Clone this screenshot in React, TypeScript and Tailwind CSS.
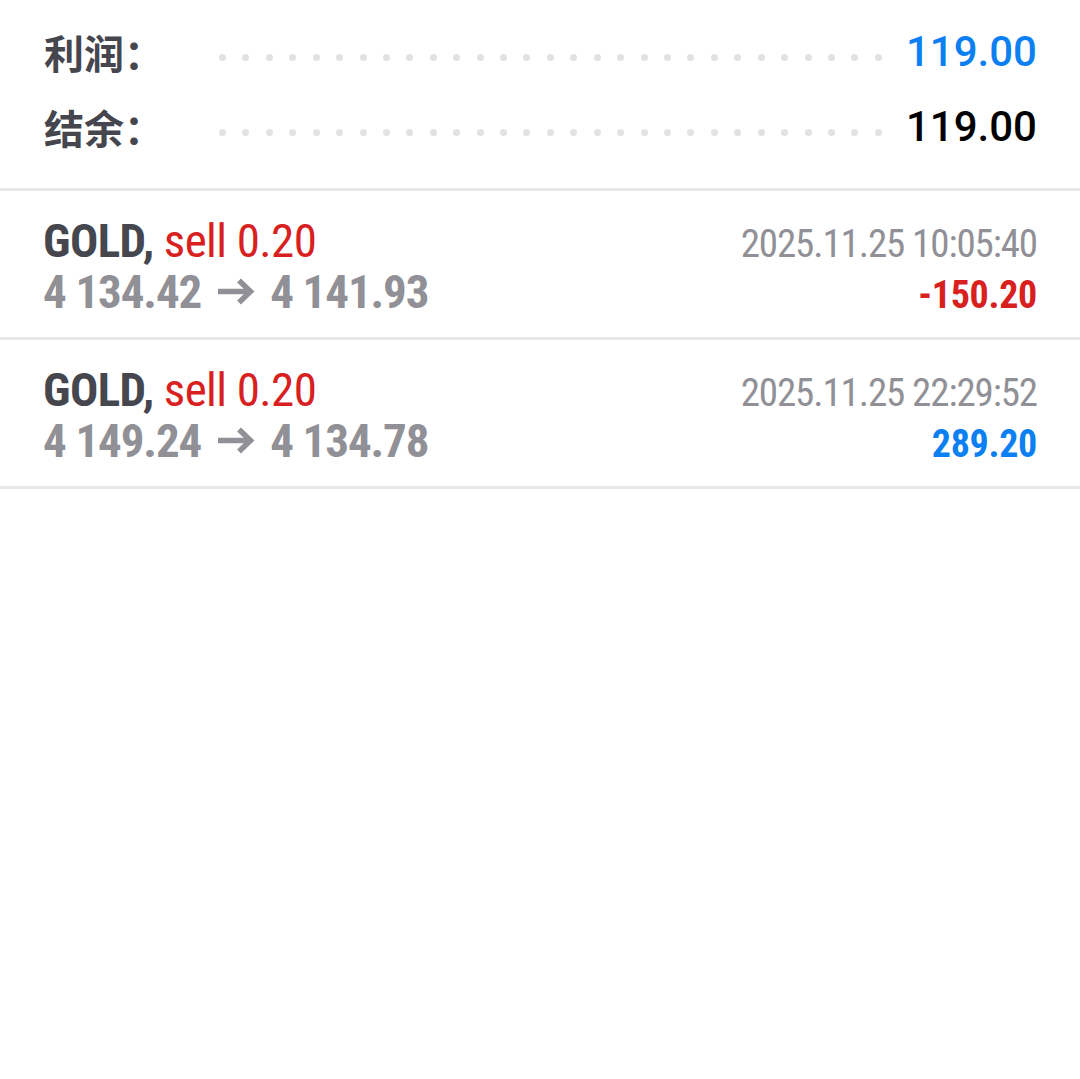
const dots = Array.from({ length: 29 });

const SummaryRow = ({ label, value, color }: { label: string; value: string; color: string }) => (
  <div className="flex items-center h-[75px]">
    <div className="w-[175px] text-[40px] font-bold text-[#46464e] leading-none [font-family:'Noto_Sans_CJK_SC',sans-serif]">
      {label}
    </div>
    <div className="w-[663px] flex justify-between items-center mt-[12px]">
      {dots.map((_, i) => (
        <span key={i} className="block w-[7px] h-[7px] rounded-full bg-[#e2e2e2]" />
      ))}
    </div>
    <div className={`flex-1 text-right text-[42px] font-medium leading-none ${color}`}>{value}</div>
  </div>
);

const Arrow = () => (
  <svg
    width="38"
    height="27"
    viewBox="0 0 38 27"
    className="inline-block ml-[16px] mr-[15px] [vertical-align:3px]"
    fill="none"
    stroke="#909096"
    strokeWidth="5.5"
  >
    <path d="M1 13.5 H33" />
    <path d="M22 2.5 L33.5 13.5 L22 24.5" strokeLinejoin="miter" />
  </svg>
);

const Trade = ({
  open,
  close,
  time,
  profit,
  profitColor,
}: {
  open: string;
  close: string;
  time: string;
  profit: string;
  profitColor: string;
}) => (
  <div className="px-[43px] pt-[24px] pb-[20px] border-b-[3px] border-[#e8e8e8] [font-stretch:80%]">
    <div className="flex justify-between items-baseline h-[51px] leading-[51px]">
      <div className="text-[47px] tracking-[-0.6px]">
        <span className="font-bold text-[#46464e]">GOLD,</span> <span className="text-[#d8201f]">sell 0.20</span>
      </div>
      <div className="text-[39px] tracking-[-1.1px] text-[#909096]">{time}</div>
    </div>
    <div className="flex justify-between items-baseline h-[51px] leading-[51px]">
      <div className="text-[47px] font-bold tracking-[-1.1px] text-[#909096] whitespace-nowrap">
        {open}
        <Arrow />
        {close}
      </div>
      <div className={`text-[38px] font-bold tracking-[-0.3px] ${profitColor}`}>{profit}</div>
    </div>
  </div>
);

export default function App() {
  return (
    <div className="w-[1080px] h-[1079px] bg-white [font-family:Roboto,sans-serif]">
      <div className="pl-[44px] pr-[43px] pt-[14px] pb-[24px] border-b-[3px] border-[#e8e8e8]">
        <SummaryRow label="利润：" value="119.00" color="text-[#0c7ff2]" />
        <SummaryRow label="结余：" value="119.00" color="text-black" />
      </div>
      <Trade open="4 134.42" close="4 141.93" time="2025.11.25 10:05:40" profit="-150.20" profitColor="text-[#d8201f]" />
      <Trade open="4 149.24" close="4 134.78" time="2025.11.25 22:29:52" profit="289.20" profitColor="text-[#0c7ff2]" />
    </div>
  );
}
